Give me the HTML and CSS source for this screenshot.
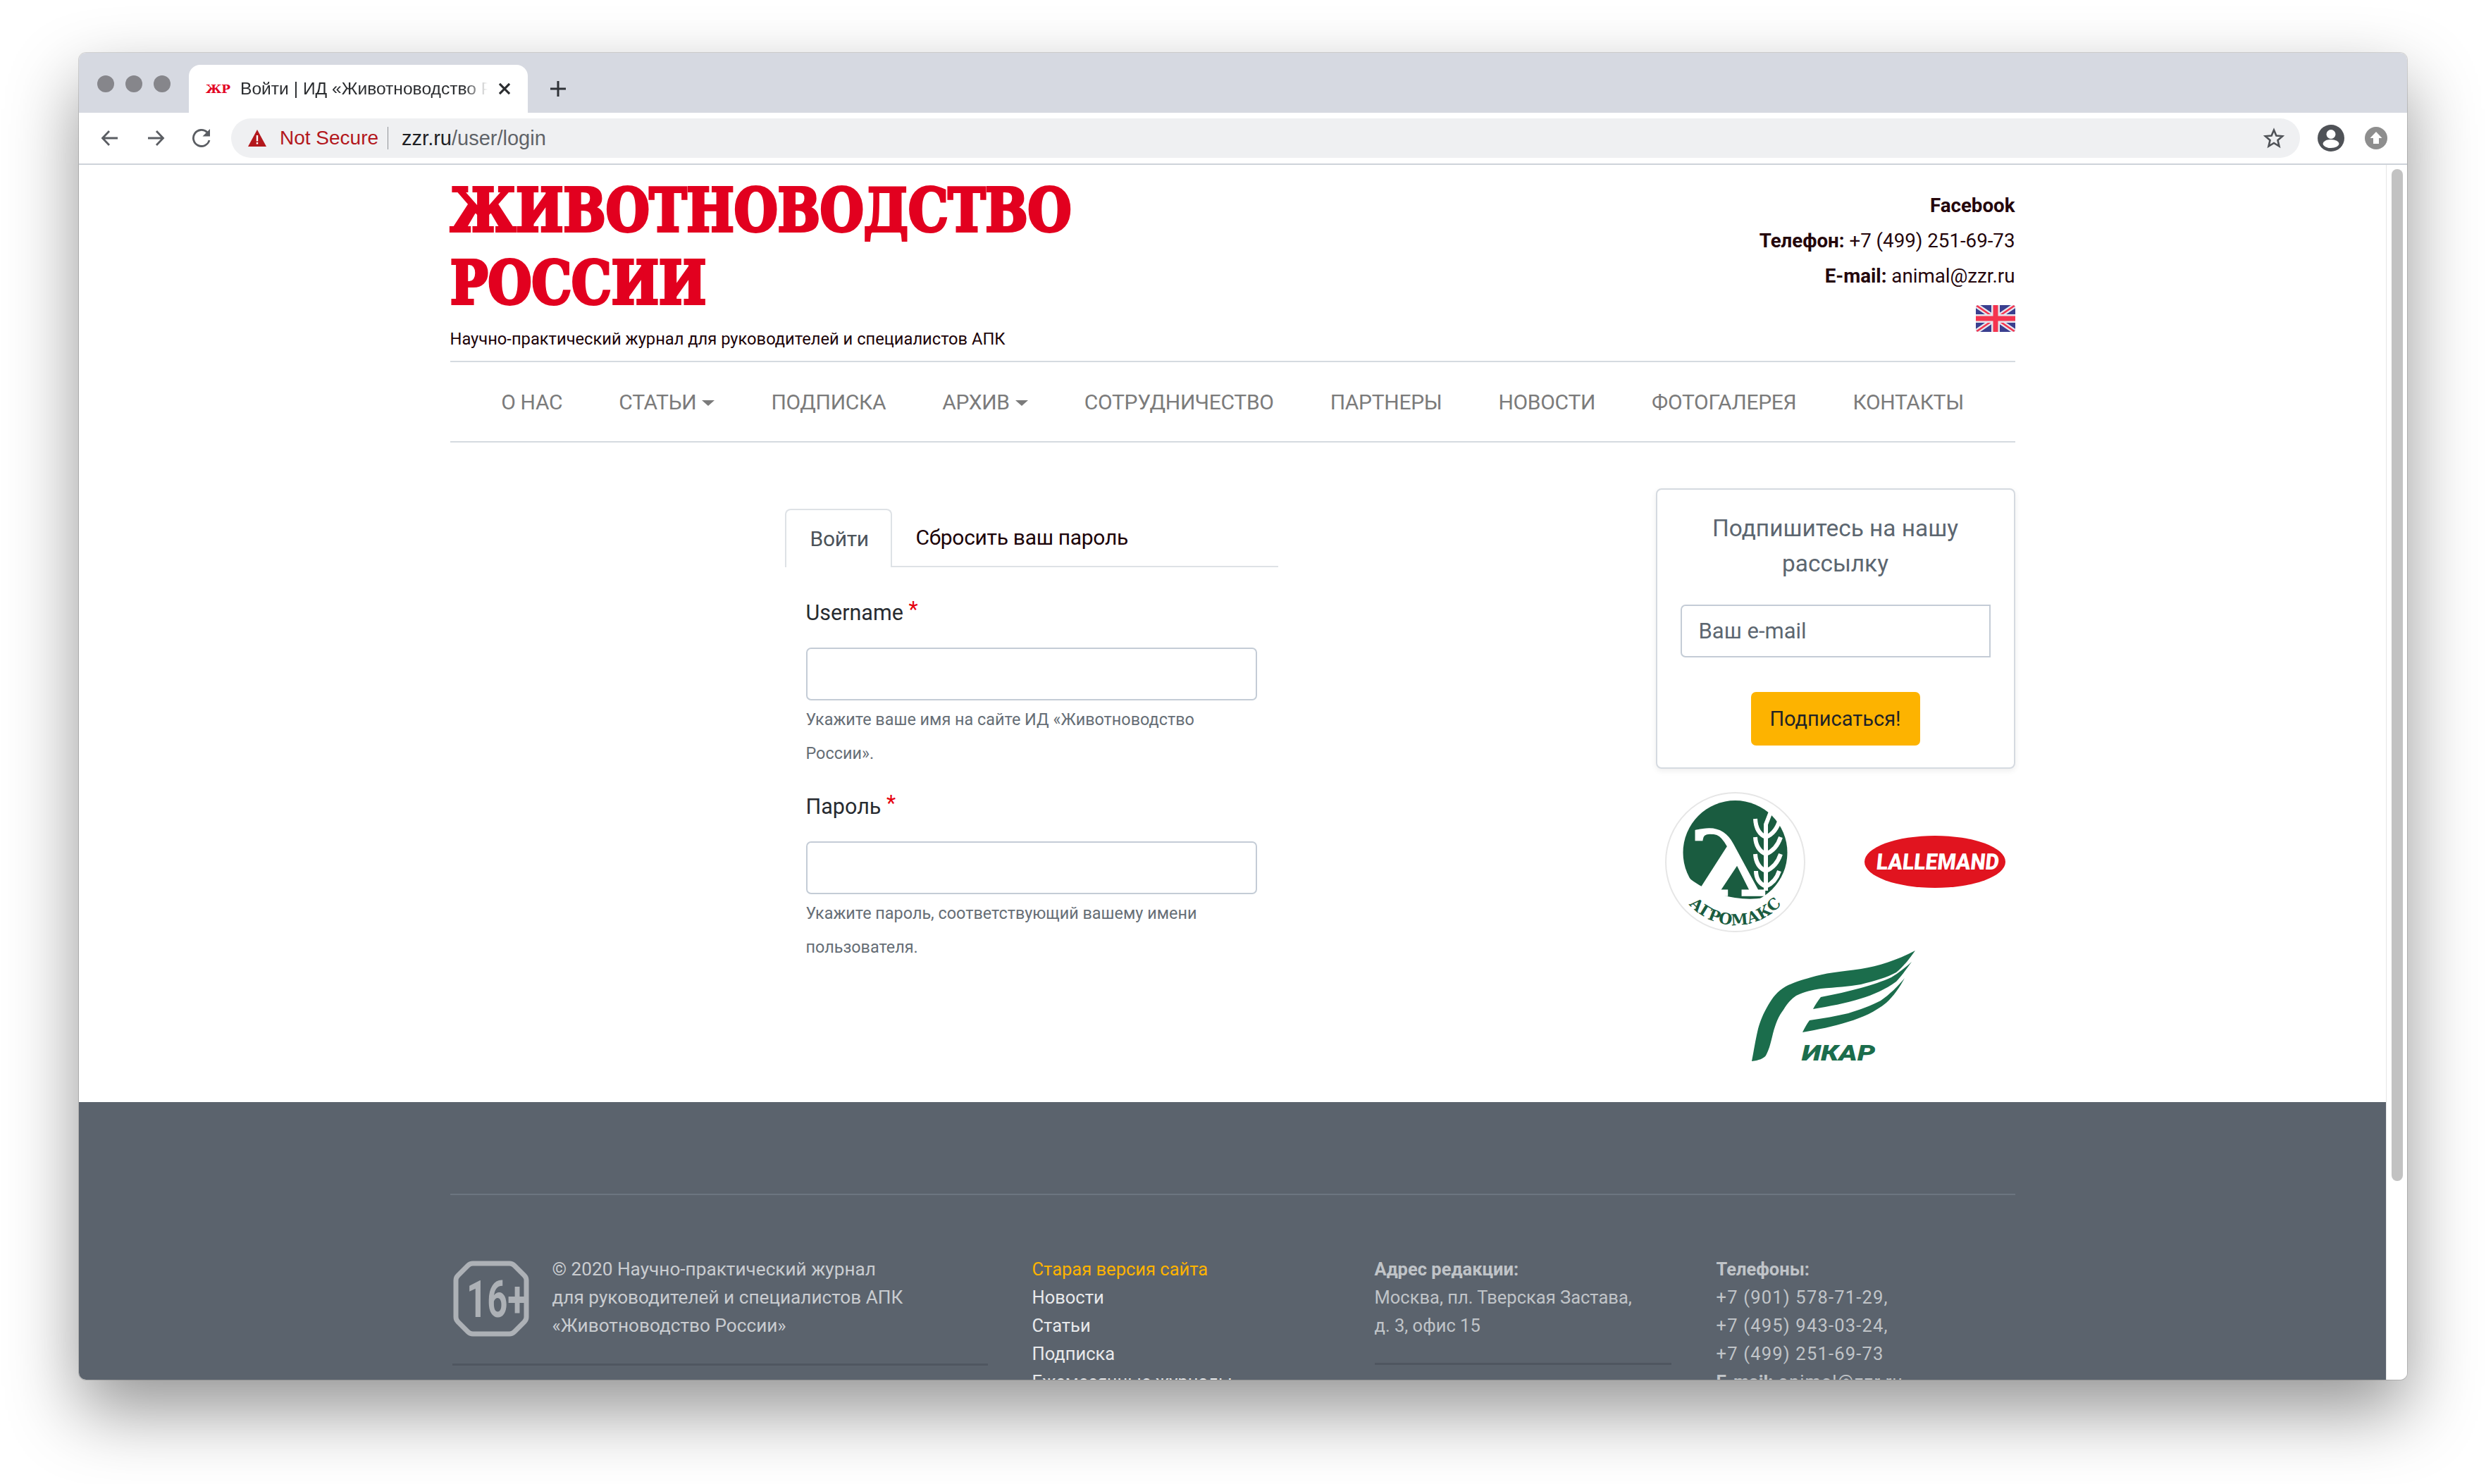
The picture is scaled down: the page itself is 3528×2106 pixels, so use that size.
FILE: index.html
```html
<!DOCTYPE html>
<html lang="ru">
<head>
<meta charset="utf-8">
<title>Войти | ИД «Животноводство России»</title>
<link rel="stylesheet" href="styles.css">
</head>
<body>
<div class="window">
  <div class="tabstrip">
    <div class="lights"><i></i><i></i><i></i></div>
    <div class="tab">
      <span class="favicon">ЖР</span>
      <span class="tabtitle">Войти | ИД «Животноводство Р</span>
      <svg class="tabclose" viewBox="0 0 14 14"><path d="M1.5 1.5l11 11M12.5 1.5l-11 11"/></svg>
    </div>
    <svg class="newtab" viewBox="0 0 24 24"><path d="M12 1v22M1 12h22"/></svg>
  </div>
  <div class="toolbar">
    <svg class="navicon" viewBox="0 0 28 28"><path d="M25 14H4M13 4L3.500 14 13 24"/></svg>
    <svg class="navicon" viewBox="0 0 28 28"><path d="M3 14h21M15 4l9.500 10L15 24"/></svg>
    <svg class="navicon" viewBox="0 0 28 28"><path d="M25 17A11.500 11.500 0 1 1 22 5.800"/><path class="solid" d="M26 1v10.500H15.500z"/></svg>
    <div class="omnibox">
      <svg class="warn" viewBox="0 0 26 24"><path d="M13 0l13 24H0z"/><path class="mark" d="M11.800 8h2.400v8.500h-2.400zM11.800 18h2.400v2.600h-2.400z"/></svg>
      <span class="notsecure">Not Secure</span>
      <span class="omnisep"></span>
      <span class="url"><b>zzr.ru</b>/user/login</span>
      <svg class="star" viewBox="0 0 30 30"><path d="M15 3.500l3.400 8.100 8.800.7-6.700 5.700 2 8.600-7.500-4.600-7.500 4.600 2-8.600-6.700-5.700 8.800-.7z"/></svg>
    </div>
    <svg class="avatar" viewBox="0 0 38 38"><circle class="avbg" cx="19" cy="19" r="19"/><circle class="avfg" cx="19" cy="13.500" r="6.500"/><ellipse class="avfg" cx="19" cy="27" rx="11.500" ry="6"/></svg>
    <svg class="update" viewBox="0 0 32 32"><circle class="upbg" cx="16" cy="16" r="16"/><path class="upfg" d="M16 7l8.500 9H20v8h-8v-8H7.500z"/></svg>
  </div>

  <div class="viewport">
    <div class="page">
      <div class="container">
        <header class="head">
          <div class="brand">
            <h1 class="sitename">ЖИВОТНОВОДСТВО<br>РОССИИ</h1>
            <p class="tagline">Научно-практический журнал для руководителей и специалистов АПК</p>
          </div>
          <div class="contacts">
            <div class="cline"><b>Facebook</b></div>
            <div class="cline"><b>Телефон:</b> +7 (499) 251-69-73</div>
            <div class="cline"><b>E-mail:</b> animal@zzr.ru</div>
            <svg class="flag" viewBox="0 0 56 38">
              <defs><clipPath id="flagclip"><rect width="56" height="38" rx="4"/></clipPath></defs>
              <g clip-path="url(#flagclip)">
                <rect width="56" height="38" fill="#3a3f8f"/>
                <path d="M0 0l56 38M56 0L0 38" stroke="#e6e6ee" stroke-width="7"/>
                <path d="M0 0l56 38M56 0L0 38" stroke="#f5344f" stroke-width="2.500"/>
                <path d="M28 0v38M0 19h56" stroke="#e6e6ee" stroke-width="12"/>
                <path d="M28 0v38M0 19h56" stroke="#f5344f" stroke-width="7"/>
              </g>
            </svg>
          </div>
        </header>
        <nav class="mainnav">
          <a>О НАС</a>
          <a class="drop">СТАТЬИ</a>
          <a>ПОДПИСКА</a>
          <a class="drop">АРХИВ</a>
          <a>СОТРУДНИЧЕСТВО</a>
          <a>ПАРТНЕРЫ</a>
          <a>НОВОСТИ</a>
          <a>ФОТОГАЛЕРЕЯ</a>
          <a>КОНТАКТЫ</a>
        </nav>
        <div class="mainrow">
          <section class="login">
            <div class="tabs">
              <a class="ltab active">Войти</a>
              <a class="ltab">Сбросить ваш пароль</a>
            </div>
            <form class="lform">
              <label class="flabel">Username <span class="req">*</span></label>
              <div class="finput"></div>
              <p class="fhelp">Укажите ваше имя на сайте ИД «Животноводство<br>России».</p>
              <label class="flabel second">Пароль <span class="req">*</span></label>
              <div class="finput"></div>
              <p class="fhelp">Укажите пароль, соответствующий вашему имени<br>пользователя.</p>
            </form>
          </section>
          <aside class="side">
            <div class="card">
              <div class="cardtitle">Подпишитесь на нашу<br>рассылку</div>
              <div class="cardinput">Ваш e-mail</div>
              <div class="cardbtn">Подписаться!</div>
            </div>
            <div class="logos">
              <svg class="agro" viewBox="0 0 199 199">
                <defs>
                  <clipPath id="agroclip"><path d="M0 0h199v128Q150 158 99 150 60 145 25 115L0 100z"/></clipPath>
                  <path id="agroarc" d="M24 146A88 88 0 0 0 175 146"/>
                </defs>
                <circle cx="99.500" cy="99.500" r="98.500" fill="#fff" stroke="#e6e6e6" stroke-width="2"/>
                <circle cx="99.500" cy="86" r="74" fill="#1a5c40" clip-path="url(#agroclip)"/>
                <text class="agrolam" transform="translate(34 147) scale(1.250 1)">λ</text>
                <g class="wheat">
                  <path d="M143 45v95"/>
                  <path d="M150 28l-7 18M143 64q-14-6-15-26M143 64q15-6 20-26M143 88q-14-6-15-24M143 88q15-6 21-24M143 112q-14-6-15-24M143 112q15-6 21-24M143 134q-14-6-14-22M143 134q14-6 19-22"/>
                </g>
                <text class="agrotext"><textPath href="#agroarc" startOffset="50%" text-anchor="middle">АГРОМАКС</textPath></text>
              </svg>
              <svg class="lalle" viewBox="0 0 200 74">
                <ellipse cx="100" cy="37" rx="100" ry="37" fill="#e1141f"/>
                <text class="lalletext" transform="translate(103 48) skewX(-6)" text-anchor="middle" textLength="174" lengthAdjust="spacingAndGlyphs">LALLEMAND</text>
              </svg>
              <svg class="ikar" viewBox="0 0 232 165">
                <path d="M232 0C205 14 180 22 155 26C125 30 103 32 84 38C66 43 56 47 48 51C36 58 30 66 23 78C16 90 12 100 9 111C5 128 3 142 0 157C10 156 17 153 20 149C25 140 27 130 30 118C34 103 38 93 45 84C50 75 56 69 63 64C75 58 86 56 98 54C120 52 137 51 155 48C175 43 192 38 205 31C216 22 225 10 232 0Z"/>
                <path d="M227 16C218 28 212 37 205 44C190 55 172 63 155 68C133 75 110 79 87 83C90 77 94 71 98 66C118 62 137 58 155 53C172 48 185 44 198 38C208 32 218 24 227 16Z"/>
                <path d="M217 39C210 52 201 65 191 74C175 87 157 95 137 101C115 108 94 112 72 116C75 110 78 104 82 99C102 96 120 93 137 89C153 84 170 78 183 71C196 62 207 51 217 39Z"/>
                <text class="ikartext" x="71" y="156" textLength="104" lengthAdjust="spacingAndGlyphs">ИКАР</text>
              </svg>
            </div>
          </aside>
        </div>
      </div>
      <footer class="foot">
        <div class="container">
          <div class="footrule"></div>
          <div class="footgrid">
            <div class="fcol">
              <div class="fcopy">
                <svg class="age" viewBox="0 0 108 108">
                  <path class="agebox" d="M28 4h52q4 0 7 3l14 14q3 3 3 7v52q0 4-3 7l-14 14q-3 3-7 3H28q-4 0-7-3L7 87q-3-3-3-7V28q0-4 3-7L21 7q3-3 7-3z"/>
                  <text class="agetext" x="19" y="80" textLength="86" lengthAdjust="spacingAndGlyphs">16+</text>
                </svg>
                <div class="copytext">© 2020 Научно-практический журнал<br>для руководителей и специалистов АПК<br>«Животноводство России»</div>
              </div>
              <div class="frule r1"></div>
            </div>
            <div class="flinks">
              <a class="old">Старая версия сайта</a>
              <a>Новости</a>
              <a>Статьи</a>
              <a>Подписка</a>
              <a>Ежемесячные журналы</a>
            </div>
            <div class="faddr">
              <b>Адрес редакции:</b><br>Москва, пл. Тверская Застава,<br>д. 3, офис 15
              <div class="frule r2"></div>
            </div>
            <div class="faddr phones">
              <b>Телефоны:</b><br>+7 (901) 578-71-29,<br>+7 (495) 943-03-24,<br>+7 (499) 251-69-73<br><b>E-mail:</b> animal@zzr.ru
            </div>
          </div>
        </div>
      </footer>
    </div>
    <div class="scrollbar"><div class="thumb"></div></div>
  </div>
</div>
</body>
</html>
```
FILE: styles.css
```css
* { box-sizing: border-box; }
html, body { margin: 0; padding: 0; background: #fff; }
body { height: 2106px; overflow: hidden; padding: 75px 112px 0; font-family: Roboto, "Noto Sans", sans-serif; color: #24060c; }

.window { height: 1883px; border-radius: 10px; overflow: hidden; display: flex; flex-direction: column; background: #fff; box-shadow: 0 44px 100px rgba(0,0,0,.42), 0 0 0 1px rgba(0,0,0,.14); }

.tabstrip { height: 85px; background: #d6d9e1; display: flex; align-items: flex-end; flex: none; }
.lights { display: flex; gap: 16px; width: 156px; padding: 0 0 29px 26px; flex: none; }
.lights i { width: 24px; height: 24px; border-radius: 50%; background: #86868b; }
.tab { width: 481px; height: 68px; background: #fff; border-radius: 16px 16px 0 0; display: flex; align-items: center; padding-left: 24px; position: relative; flex: none; }
.favicon { font: 700 17px "DejaVu Serif", serif; color: #e2001f; width: 49px; flex: none; }
.tabtitle { font: 24.600px "Liberation Sans", Arial, sans-serif; color: #2b2d30; width: 362px; white-space: nowrap; -webkit-mask-image: linear-gradient(90deg, #000 88%, transparent 97%); mask-image: linear-gradient(90deg, #000 88%, transparent 97%); flex: none; }
.tabclose { width: 18px; height: 18px; margin-left: 4px; flex: none; }
.tabclose path { stroke: #2b2d30; stroke-width: 2.400; fill: none; }
.newtab { width: 24px; height: 24px; margin: 0 0 22px 31px; flex: none; }
.newtab path { stroke: #2f3237; stroke-width: 3; fill: none; }

.toolbar { height: 74px; background: #fff; border-bottom: 2px solid #ced3d9; display: flex; align-items: center; padding: 0 32px 0 30px; flex: none; }
.navicon { width: 28px; height: 28px; margin-right: 37px; flex: none; }
.navicon path { stroke: #5b5e63; stroke-width: 2.800; fill: none; }
.navicon path.solid { fill: #5b5e63; stroke: none; }
.omnibox { width: 2936px; height: 56px; margin-left: -9px; background: #eff0f2; border-radius: 28px; display: flex; align-items: center; padding: 0 22px 0 24px; flex: none; }
.warn { width: 26px; height: 24px; flex: none; }
.warn path { fill: #b3171c; }
.warn path.mark { fill: #fff; }
.notsecure { font: 28px "Liberation Sans", Arial, sans-serif; color: #b3171c; margin-left: 19px; }
.omnisep { width: 1px; height: 32px; background: #8f9398; margin: 0 19px 0 13px; }
.url { font: 29px "Liberation Sans", Arial, sans-serif; color: #5f6368; }
.url b { font-weight: 400; color: #202124; }
.star { width: 30px; height: 30px; margin-left: auto; }
.star path { fill: none; stroke: #4f5257; stroke-width: 2.600; }
.avatar { width: 38px; height: 38px; margin-left: 25px; flex: none; }
.avbg { fill: #4f5257; }
.avfg { fill: #fff; }
.update { width: 32px; height: 32px; margin-left: 29px; flex: none; }
.upbg { fill: #8e8e8e; }
.upfg { fill: #fff; }

.viewport { flex: 1; min-height: 0; display: flex; overflow: hidden; }
.page { flex: 1; min-width: 0; }
.scrollbar { width: 30px; flex: none; border-left: 1px solid #e6e6e6; padding: 6px 6px 0 7px; background: #fff; }
.thumb { height: 1436px; background: #c2c2c2; border-radius: 8px; }

.container { width: 2221px; margin: 0 auto; }
.head { display: flex; justify-content: space-between; padding-top: 13px; }
.brand { min-width: 0; }
.sitename { margin: 0; font: 700 85px/103px "DejaVu Serif", serif; font-stretch: condensed; color: #e2001f; -webkit-text-stroke: 4px #e2001f; white-space: nowrap; transform: scaleX(.93); transform-origin: left top; }
.tagline { margin: 8px 0 11px; font-size: 23.700px; line-height: 40px; color: #1c0309; }
.contacts { text-align: right; padding-top: 20px; font-size: 27.700px; }
.cline { line-height: 50px; }
.cline b { font-weight: 700; }
.flag { display: block; width: 56px; height: 38px; margin: 16px 0 0 auto; }

.mainnav { height: 116px; border-top: 2px solid #d5dae0; border-bottom: 2px solid #d5dae0; display: flex; align-items: center; justify-content: center; gap: 80px; font-size: 30px; letter-spacing: -.3px; color: #7b7b7b; }
.drop::after { content: ""; display: inline-block; margin-left: 8px; vertical-align: 5px; border-top: 8px solid #7b7b7b; border-left: 9px solid transparent; border-right: 9px solid transparent; }

.mainrow { display: flex; justify-content: space-between; height: 936px; }
.login { width: 700px; margin: 94px 0 0 475px; }
.tabs { height: 83px; display: flex; border-bottom: 2px solid #dee2e6; }
.ltab { height: 83px; padding: 0 34px; line-height: 81px; font-size: 30px; letter-spacing: -.3px; color: #1c0309; }
.ltab.active { width: 152px; border: 2px solid #dee2e6; border-bottom: 0; border-radius: 8px 8px 0 0; background: #fff; color: #4c5359; }
.lform { padding-left: 30px; }
.flabel { display: block; font-size: 30.500px; line-height: 48px; margin-top: 41px; color: #272b30; }
.flabel.second { margin-top: 28px; }
.req { color: #e6000f; position: relative; top: -5px; }
.finput { width: 640px; height: 75px; margin-top: 25px; border: 2px solid #c4ccd6; border-radius: 7px; background: #fff; }
.fhelp { margin: 3px 0 0; font-size: 23.400px; line-height: 48px; color: #666e76; }

.side { width: 510px; padding-top: 65px; }
.card { height: 398px; border: 2px solid #d5dae0; border-radius: 8px; box-shadow: 0 3px 8px rgba(0,0,0,.07); padding: 30px 33px 0; text-align: center; background: #fff; }
.cardtitle { font-size: 33.400px; line-height: 50px; color: #5c6670; }
.cardinput { height: 75px; margin-top: 33px; border: 2px solid #c4ccd6; border-radius: 7px 0 0 7px; text-align: left; padding-left: 24px; font-size: 31px; line-height: 71px; color: #5c6670; }
.cardbtn { width: 240px; height: 76px; margin: 49px auto 0; background: #fdb300; border-radius: 7px; font-size: 29px; line-height: 76px; color: #1f2326; }

.logos { display: flex; flex-wrap: wrap; padding: 33px 0 0 13px; }
.agro { width: 199px; height: 199px; display: block; }
.lalle { width: 200px; height: 74px; margin: 62px 0 0 84px; display: block; }
.ikar { width: 232px; height: 165px; margin: 26px 0 0 123px; display: block; fill: #1b6d4c; }
.agrolam { font: 700 130px "DejaVu Serif", serif; fill: #fff; stroke: #fff; stroke-width: 1.500px; }
.wheat path { fill: none; stroke: #fff; stroke-width: 6; }
.agrotext { font: 700 22px "DejaVu Serif", serif; fill: #1a5c40; }
.lalletext { font: 900 32px Roboto, sans-serif; fill: #fff; }
.ikartext { font: italic 900 32px Roboto, sans-serif; fill: #1b6d4c; }

.foot { background: #5b636d; height: 400px; padding-top: 130px; }
.footrule { height: 2px; background: #6c7580; }
.footgrid { display: grid; grid-template-columns: 826px 486px 485px 1fr; margin-top: 85px; font-size: 25.500px; line-height: 40px; }
.fcopy { display: flex; gap: 33px; padding-left: 4px; }
.age { width: 108px; height: 108px; margin-top: 8px; flex: none; }
.agebox { fill: none; stroke: #adb1b6; stroke-width: 7; }
.agetext { font: 700 72px Roboto, sans-serif; fill: #adb1b6; }
.copytext { color: #c9ccd0; font-size: 26.200px; white-space: nowrap; }
.frule { height: 3px; background: #4f5660; }
.frule.r1 { width: 760px; margin: 34px 0 0 3px; }
.frule.r2 { width: 421px; margin-top: 33px; }
.flinks { display: flex; flex-direction: column; color: #e8e9eb; }
.flinks .old { color: #fdb300; }
.faddr { color: #c0c4c8; }
.phones { letter-spacing: 1.200px; }
.phones b { letter-spacing: 0; }
```
